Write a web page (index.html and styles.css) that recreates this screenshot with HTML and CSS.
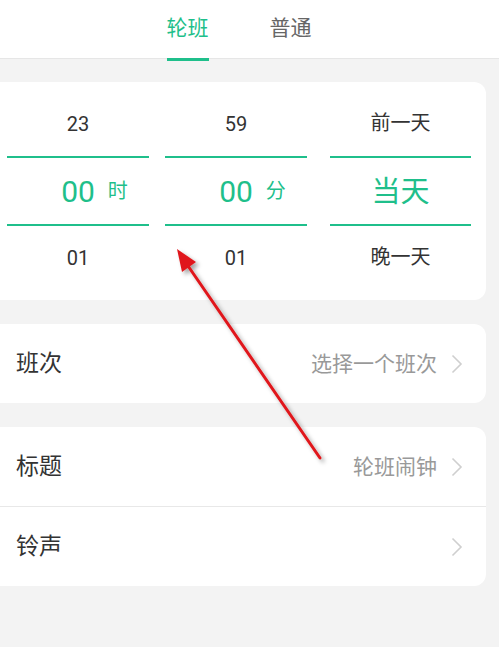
FILE: index.html
```html
<!DOCTYPE html>
<html lang="zh-CN">
<head>
    <meta charset="UTF-8">
    <meta name="viewport" content="width=device-width, initial-scale=1.0">
    <title>轮班闹钟</title>
    <link rel="stylesheet" href="styles.css">
</head>
<body>
    <div class="tabs">
        <div class="tab active">轮班</div>
        <div class="tab">普通</div>
    </div>

    <div class="content">
        <div class="card picker">
            <div class="col">
                <div class="cell">23</div>
                <div class="cell current"><span></span><span class="num">00</span><span class="unit">时</span></div>
                <div class="cell">01</div>
            </div>
            <div class="col">
                <div class="cell">59</div>
                <div class="cell current"><span></span><span class="num">00</span><span class="unit">分</span></div>
                <div class="cell">01</div>
            </div>
            <div class="col day">
                <div class="cell"><span class="han">前一天</span></div>
                <div class="cell current"><span class="day-now">当天</span></div>
                <div class="cell"><span class="han">晚一天</span></div>
            </div>
        </div>

        <div class="card list">
            <div class="row">
                <span class="label">班次</span>
                <span class="value">选择一个班次</span>
                <svg class="arrow" width="12" height="20" viewBox="0 0 12 20"><path d="M1.5 1.5 L10 10 L1.5 18.5" fill="none" stroke="#cfcfcf" stroke-width="1.6"/></svg>
            </div>
        </div>

        <div class="card list">
            <div class="row">
                <span class="label">标题</span>
                <span class="value">轮班闹钟</span>
                <svg class="arrow" width="12" height="20" viewBox="0 0 12 20"><path d="M1.5 1.5 L10 10 L1.5 18.5" fill="none" stroke="#cfcfcf" stroke-width="1.6"/></svg>
            </div>
            <div class="row">
                <span class="label">铃声</span>
                <span class="value"></span>
                <svg class="arrow" width="12" height="20" viewBox="0 0 12 20"><path d="M1.5 1.5 L10 10 L1.5 18.5" fill="none" stroke="#cfcfcf" stroke-width="1.6"/></svg>
            </div>
        </div>
    </div>

    <!-- 标注箭头 -->
    <svg class="mark" width="499" height="647" viewBox="0 0 499 647">
        <defs>
            <filter id="shadow" x="-20%" y="-20%" width="140%" height="140%">
                <feDropShadow dx="3" dy="3" stdDeviation="2" flood-color="#000" flood-opacity="0.35"/>
            </filter>
        </defs>
        <g filter="url(#shadow)">
            <line x1="320" y1="458" x2="186" y2="263" stroke="#e0191b" stroke-width="3" stroke-linecap="round"/>
            <polygon points="177,249 196,262 182,272" fill="#e0191b"/>
        </g>
    </svg>
</body>
</html>
```

FILE: styles.css
```css
body {
    margin: 0;
    background: #f3f3f3;
    font-family: Roboto, "Noto Sans CJK SC", sans-serif;
    color: #333;
    position: relative;
    height: 647px;
    overflow: hidden;
}

.tabs {
    height: 58px;
    background: #fff;
    border-bottom: 1px solid #e6e6e6;
    display: flex;
    justify-content: center;
    gap: 61px;
    padding-right: 21px;
}

.tab {
    font-size: 21px;
    line-height: 56px;
    color: #666;
    position: relative;
}

.tab.active {
    color: #1fbf8b;
}

.tab.active::after {
    content: "";
    position: absolute;
    left: 0;
    right: 0;
    bottom: -3px;
    height: 3px;
    background: #1fbf8b;
}

.content {
    padding: 23px 13px 0 0;
    margin-left: -13px;
}

.card {
    background: #fff;
    border-radius: 12px;
    margin-bottom: 24px;
}

/* 时间选择 */
.picker {
    display: flex;
    padding: 10px 15px 10px 20px;
}

.col {
    width: 142px;
}

.col + .col {
    margin-left: 16px;
}

.col.day {
    width: 141px;
    margin-left: 23px;
}

.cell {
    height: 64px;
    display: flex;
    align-items: center;
    justify-content: center;
    font-size: 20px;
    color: #333;
}

.han {
    font-size: 20px;
    padding-bottom: 5px;
}

.cell.current {
    height: 66px;
    border-top: 2px solid #1fbf8b;
    border-bottom: 2px solid #1fbf8b;
    display: grid;
    grid-template-columns: 1fr auto 1fr;
    align-items: center;
    color: #1fbf8b;
}

.num {
    font-size: 30px;
}

.unit {
    font-size: 20px;
    margin-left: 13px;
    padding-bottom: 4px;
}

.col.day .cell.current {
    display: flex;
}

.day-now {
    font-size: 29px;
    color: #1fbf8b;
    padding-bottom: 4px;
}

/* 设置列表 */
.row {
    height: 79px;
    display: flex;
    align-items: center;
    padding: 0 23px 0 29px;
}

.row + .row {
    border-top: 1px solid #e8e8e8;
}

.label {
    font-size: 23px;
    color: #333;
    flex: 1;
    padding-bottom: 5px;
}

.value {
    font-size: 21px;
    color: #999;
    margin-right: 14px;
    padding-bottom: 4px;
}

.arrow {
    display: block;
}

.mark {
    position: absolute;
    left: 0;
    top: 0;
    pointer-events: none;
}
```
